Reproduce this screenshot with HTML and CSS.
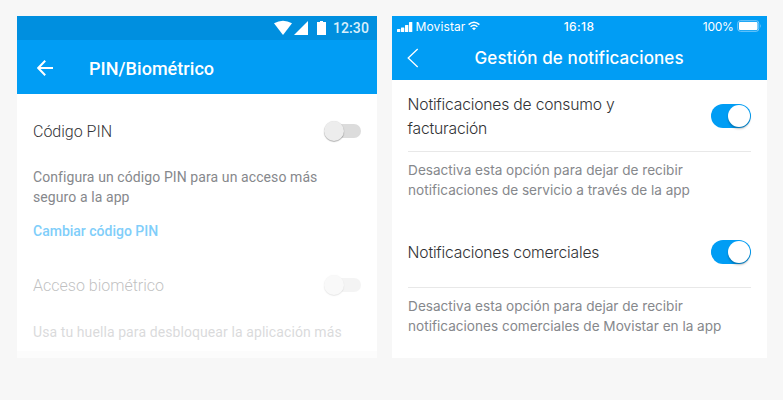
FILE: index.html
```html
<!DOCTYPE html>
<html lang="es">
<head>
<meta charset="utf-8">
<title>Ajustes</title>
<link rel="stylesheet" href="styles.css">
</head>
<body>
<main class="screens">
  <section class="phone android">
    <div class="a-status">
      <svg class="a-icons" width="54" height="16" viewBox="0 0 54 16"><g fill="#fff"><path d="M0 3.3Q9 -1.8 18 3.3L9 15Z"/><path d="M34 1V15H20Z"/><path d="M43 2h3V1h3v1h3v13h-9Z"/></g></svg>
      <span class="a-time">12:30</span>
    </div>
    <header class="a-header">
      <svg width="16" height="16" viewBox="0 0 16 16"><path d="M16 8H1.5M8.2 .8L1.2 8l7 7.2" fill="none" stroke="#fff" stroke-width="2"/></svg>
      <h1 class="a-title">PIN/Biométrico</h1>
    </header>
    <div class="a-body">
      <div class="a-row"><span class="a-label">Código PIN</span><span class="a-switch"><i></i></span></div>
      <p class="a-text">Configura un código PIN para un acceso más<br>seguro a la app</p>
      <a class="a-link">Cambiar código PIN</a>
      <div class="a-disabled">
        <div class="a-row"><span class="a-label">Acceso biométrico</span><span class="a-switch"><i></i></span></div>
        <p class="a-text">Usa tu huella para desbloquear la aplicación más</p>
      </div>
    </div>
    <div class="a-foot"></div>
  </section>
  <section class="phone ios">
    <div class="i-status">
      <div class="i-left">
        <svg width="16" height="11" viewBox="0 0 16 11"><g fill="#fff"><rect x="0" y="8" width="3.3" height="3" rx=".5"/><rect x="4" y="6.5" width="3.3" height="4.5" rx=".5"/><rect x="8" y="4" width="3.3" height="7" rx=".5"/><rect x="12" y="1" width="3.3" height="10" rx=".5"/></g></svg>
        <span class="carrier">Movistar</span>
        <svg width="12" height="10" viewBox="0 0 12 10"><path d="M.6 3.6Q6-1.2 11.4 3.6M2.6 5.8Q6 2.8 9.4 5.8" fill="none" stroke="#fff" stroke-width="1.5"/><path d="M4 7.2Q6 5.8 8 7.2L6 9.3Z" fill="#fff"/></svg>
      </div>
      <span class="i-time">16:18</span>
      <div class="i-right">
        <span class="pct">100%</span>
        <svg width="25" height="12" viewBox="0 0 25 12"><rect x=".75" y=".75" width="21" height="10.5" rx="2.5" fill="none" stroke="#7fcbfb"/><rect x="2" y="2" width="18.5" height="8" rx="1" fill="#fff"/><path d="M23 4Q24.5 6 23 8Z" fill="#7fcbfb"/></svg>
      </div>
    </div>
    <header class="i-header">
      <svg width="12" height="20" viewBox="0 0 12 20"><path d="M10.7 1L1.2 10l9.5 9" fill="none" stroke="#fff" stroke-width="1.3"/></svg>
      <h1 class="i-title">Gestión de notificaciones</h1>
    </header>
    <div class="i-body">
      <div class="i-row"><span class="i-label">Notificaciones de consumo y<br>facturación</span><span class="i-switch"><i></i></span></div>
      <p class="i-text">Desactiva esta opción para dejar de recibir<br>notificaciones de servicio a través de la app</p>
      <div class="i-row second"><span class="i-label">Notificaciones comerciales</span><span class="i-switch"><i></i></span></div>
      <p class="i-text">Desactiva esta opción para dejar de recibir<br>notificaciones comerciales de Movistar en la app</p>
    </div>
  </section>
</main>
</body>
</html>
```
FILE: styles.css
```css
* { box-sizing: border-box; }
body { margin: 0; background: #f7f7f7; }
h1, p { margin: 0; white-space: nowrap; }
svg { display: block; flex: none; }
span { white-space: nowrap; }
.screens { display: flex; gap: 14.6px; padding: 16px 0 0 17px; }
.phone { height: 342px; background: #fff; display: flex; flex-direction: column; }

.android { width: 360px; font-family: Roboto, sans-serif; }
.a-status { height: 24px; background: #008fdf; display: flex; align-items: center; justify-content: flex-end; padding-right: 8px; gap: 5px; }
.a-time { color: #d9effb; font-size: 14px; font-weight: 500; letter-spacing: .1px; }
.a-header { height: 54px; background: #019df4; display: flex; align-items: center; padding: 2px 20px 0; gap: 36px; }
.a-title { color: #fff; font-size: 18px; font-weight: 500; letter-spacing: .05px; }
.a-body { flex: 1; padding: 25px 16px 0; }
.a-row { height: 24px; display: flex; align-items: center; justify-content: space-between; }
.a-label { color: #313235; font-size: 16px; font-weight: 300; }
.a-switch { width: 31px; height: 14px; display: flex; align-items: center; background: #dcdcdc; border-radius: 7px; }
.a-switch i { flex: none; width: 20px; height: 20px; margin-left: -6px; border-radius: 50%; background: #ededed; box-shadow: 0 1px 1px rgba(0, 0, 0, .28), 0 0 1px rgba(0, 0, 0, .15); }
.a-text { margin-top: 24px; color: #86888c; font-size: 14px; line-height: 20px; letter-spacing: .09px; }
.a-link { display: block; margin-top: 14px; color: #80cefa; font-size: 14px; line-height: 20px; font-weight: 500; }
.a-disabled { margin-top: 32px; opacity: .3; }
.a-disabled .a-text { margin-top: 25px; }
.a-foot { height: 7px; background: #fcfcfc; }

.ios { width: 375px; font-family: Inter, sans-serif; color: #fff; }
.i-status { height: 20px; background: #019df4; display: grid; grid-template-columns: 1fr auto 1fr; align-items: center; padding: 0 5px; font-size: 12px; }
.i-left, .i-right { display: flex; align-items: center; }
.i-left { gap: 3px; }
.carrier { letter-spacing: .1px; }
.i-right { justify-content: flex-end; gap: 3px; }
.pct { letter-spacing: -.25px; }
.i-time { font-weight: 500; letter-spacing: .4px; }
.i-header { height: 44px; background: #019df4; display: grid; grid-template-columns: 12px 1fr 12px; align-items: center; padding: 0 15px; }
.i-title { font-size: 17px; font-weight: 500; text-align: center; letter-spacing: .1px; }
.i-body { padding: 0 16px; }
.i-row { height: 72px; display: flex; align-items: center; justify-content: space-between; border-bottom: 1px solid #e8e8e8; }
.i-row.second { margin-top: 16px; }
.i-label { padding-top: 2px; color: #313235; font-size: 15.7px; line-height: 24px; font-weight: 300; letter-spacing: -.2px; }
.i-text { padding: 8px 0 0 .5px; color: #86888c; font-size: 13.6px; line-height: 20px; letter-spacing: -.01px; }
.i-switch { width: 40px; height: 24px; flex: none; display: flex; align-items: center; justify-content: flex-end; padding-right: 1px; border-radius: 12px; background: #019df4; }
.i-switch i { width: 22px; height: 22px; border-radius: 50%; background: #fff; box-shadow: 0 2px 2px rgba(0, 0, 0, .25); }
```
